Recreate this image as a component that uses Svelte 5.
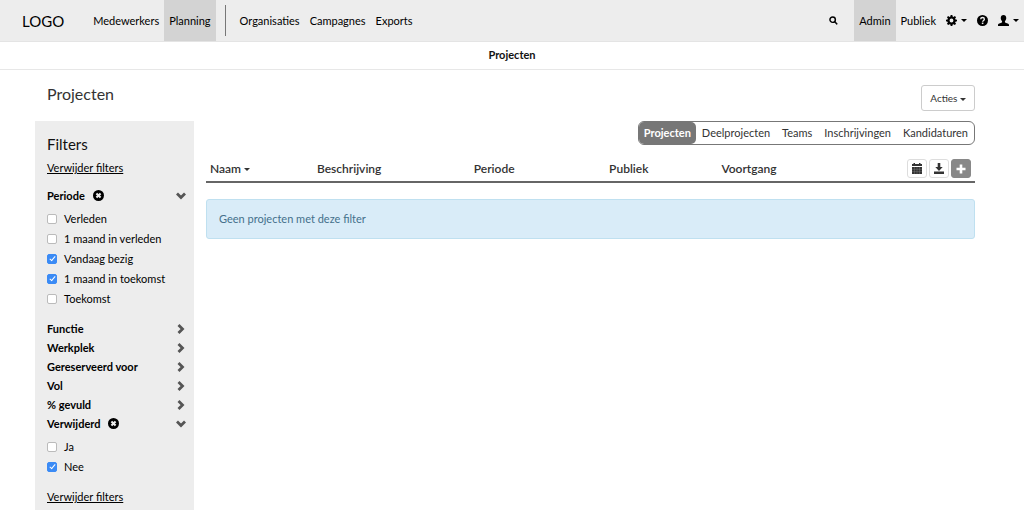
<script>
  const mainNav = [
    { label: "Medewerkers" },
    { label: "Planning", active: true },
  ];
  const extraNav = ["Organisaties", "Campagnes", "Exports"];
  const tabs = ["Projecten", "Deelprojecten", "Teams", "Inschrijvingen", "Kandidaturen"];

  let tab = $state("Projecten");

  let groups = $state([
    {
      name: "Periode", open: true,
      options: [
        { label: "Verleden", checked: false },
        { label: "1 maand in verleden", checked: false },
        { label: "Vandaag bezig", checked: true },
        { label: "1 maand in toekomst", checked: true },
        { label: "Toekomst", checked: false },
      ],
    },
    { name: "Functie", open: false, options: [] },
    { name: "Werkplek", open: false, options: [] },
    { name: "Gereserveerd voor", open: false, options: [] },
    { name: "Vol", open: false, options: [] },
    { name: "% gevuld", open: false, options: [] },
    {
      name: "Verwijderd", open: true,
      options: [
        { label: "Ja", checked: false },
        { label: "Nee", checked: true },
      ],
    },
  ]);

  function clearGroup(group) {
    for (const o of group.options) o.checked = false;
  }

  function clearAll(e) {
    e.preventDefault();
    groups.forEach(clearGroup);
  }
</script>

{#snippet caret()}
  <svg class="caret" viewBox="0 0 6 3" aria-hidden="true"><path d="M0 0h6L3 3z" /></svg>
{/snippet}

<header class="topbar">
  <a class="logo" href="#home">LOGO</a>
  <nav class="nav">
    {#each mainNav as item}
      <a href="#{item.label}" class:active={item.active}>{item.label}</a>
    {/each}
    <span class="divider"></span>
    {#each extraNav as label}
      <a href="#{label}">{label}</a>
    {/each}
  </nav>
  <nav class="nav right">
    <button class="search" aria-label="Zoeken">
      <svg viewBox="0 0 16 16"><circle cx="6.5" cy="6.5" r="4.8" fill="none" stroke="currentColor" stroke-width="2.6" /><path d="M9.500 10.500l1-1 4.500 4.300-1.400 1.400z" stroke="currentColor" /></svg>
    </button>
    <a href="#admin" class="active">Admin</a>
    <a href="#publiek">Publiek</a>
    <button class="settings" aria-label="Instellingen">
      <svg class="big" viewBox="0 0 16 16"><path fill-rule="evenodd" d="M6.8 0h2.4l.5 2.3 1.2.5 2-1.3 1.7 1.7-1.3 2 .5 1.2 2.2.4v2.4l-2.2.5-.5 1.2 1.3 2-1.7 1.7-2-1.3-1.2.5L9.2 16H6.8l-.5-2.2-1.2-.5-2 1.3-1.7-1.7 1.3-2-.5-1.2L0 9.200V6.800l2.200-.4.5-1.200-1.300-2 1.700-1.700 2 1.300 1.200-.5zM8 5.200a2.800 2.800 0 1 0 0 5.600 2.800 2.800 0 0 0 0-5.600z" /></svg>
      {@render caret()}
    </button>
    <button class="help" aria-label="Help">
      <svg class="big" viewBox="0 0 16 16"><circle cx="8" cy="8" r="8" /><path d="M5.400 6.200c0-3.400 5.300-3.400 5.300 0 0 1.700-2.500 1.800-2.500 3.600" fill="none" stroke="#eee" stroke-width="2" /><path d="M7 11h2.300v2.200H7z" fill="#eee" /></svg>
    </button>
    <button class="user" aria-label="Gebruiker">
      <svg class="big" viewBox="0 0 16 16"><path d="M8 0c2.500 0 4 1.700 4 4.300 0 1.900-.8 3.700-1.900 4.700v1.500c.4.900 5.500 1.700 5.900 3.600V16H0v-1.900c.4-1.900 5.500-2.700 5.900-3.600V9C4.800 8 4 6.200 4 4.300 4 1.700 5.500 0 8 0z" /></svg>
      {@render caret()}
    </button>
  </nav>
</header>

<div class="subbar">Projecten</div>

<div class="page">
  <div class="titlebar">
    <h1>Projecten</h1>
    <button class="actions">Acties {@render caret()}</button>
  </div>

  <div class="columns">
    <aside class="filters">
      <h2>Filters</h2>
      <a class="clear" href="#clear" onclick={clearAll}>Verwijder filters</a>
      <div class="groups">
        {#each groups as group}
          <section>
            <div class="group-head">
              <span>{group.name}</span>
              {#if group.options.some(o => o.checked)}
                <button class="reset" aria-label="Wis {group.name}" onclick={() => clearGroup(group)}>
                  <svg viewBox="0 0 16 16"><circle cx="8" cy="8" r="8" /><path d="M5 5l6 6M11 5l-6 6" stroke="#ededed" stroke-width="3" /></svg>
                </button>
              {/if}
              <button class="toggle" aria-label={group.name} aria-expanded={group.open} onclick={() => group.open = !group.open}>
                <svg class:open={group.open} viewBox="0 0 10 10"><path d="M2.500 1L6.500 5 2.500 9" fill="none" stroke="currentColor" stroke-width="2.800" /></svg>
              </button>
            </div>
            {#if group.open}
              <div class="options">
                {#each group.options as option}
                  <label><input type="checkbox" bind:checked={option.checked} />{option.label}</label>
                {/each}
              </div>
            {/if}
          </section>
        {/each}
      </div>
      <a class="clear" href="#clear" onclick={clearAll}>Verwijder filters</a>
    </aside>

    <main>
      <div class="tabs">
        {#each tabs as t}
          <button class:active={t === tab} onclick={() => tab = t}>{t}</button>
        {/each}
      </div>

      <table>
        <thead>
          <tr>
            <th class="naam">Naam {@render caret()}</th>
            <th class="beschrijving">Beschrijving</th>
            <th class="periode">Periode</th>
            <th class="publiek">Publiek</th>
            <th>Voortgang</th>
            <td>
              <div class="tools">
                <button aria-label="Kalender">
                  <svg viewBox="0 0 12 12"><path d="M1 1h1.500V0h1.500v1h4V0h1.500v1H11v2H1z" /><path d="M1 4h10v7H1z" /><path d="M1 6.300h10M1 8.600h10M3.500 4v7M6 4v7M8.500 4v7" stroke="#999" stroke-width=".3" /></svg>
                </button>
                <button aria-label="Downloaden">
                  <svg viewBox="0 0 12 12"><path d="M4.700 0h2.600v4h2.400L6 8 2.300 4h2.400zM1 8.500h10V11H1z" /></svg>
                </button>
                <button class="add" aria-label="Toevoegen">
                  <svg viewBox="0 0 12 12"><path d="M4.700 1.500h2.600v3.200h3.200v2.600H7.300v3.200H4.700V7.300H1.500V4.700h3.200z" /></svg>
                </button>
              </div>
            </td>
          </tr>
        </thead>
      </table>

      <div class="alert">Geen projecten met deze filter</div>
    </main>
  </div>
</div>

<style>
  :global(body) {
    background: #fff;
    color: #333;
    font-family: Lato, "Open Sans", sans-serif;
    font-size: 11px;
    line-height: 16px;
  }
  a { color: inherit; text-decoration: none; }
  button {
    border: 0;
    padding: 0;
    background: none;
    color: inherit;
    font: inherit;
    cursor: pointer;
  }
  svg { display: block; fill: currentColor; flex: none; }
  .caret { display: inline-block; width: 6px; height: 3px; vertical-align: middle; }

  .topbar {
    display: flex;
    align-items: center;
    height: 41px;
    background: #ededed;
    border-bottom: 1px solid #e4e4e4;
    color: #000;
  }
  .logo { padding: 0 24px 0 22px; font-size: 15px; }
  .nav { display: flex; align-items: center; height: 100%; }
  .nav a {
    display: flex;
    align-items: center;
    height: 100%;
    padding: 0 5px;
  }
  .nav a.active { background: #d3d3d3; }
  .divider { width: 1px; height: 31px; margin: 0 9px; background: #777; }
  .right { margin-left: auto; }
  .right button { display: flex; align-items: center; gap: 4px; padding: 0 5px; }
  .right svg:not(.caret) { width: 9px; height: 9px; }
  .right svg.big { width: 11px; height: 11px; }
  .right .search { padding: 0 16px; }

  .subbar {
    padding: 5px 0 6px;
    border-bottom: 1px solid #e7e7e7;
    color: #111;
    font-weight: bold;
    text-align: center;
  }

  .page { padding: 15px 49px 0 35px; }
  .titlebar { display: flex; justify-content: space-between; align-items: flex-start; padding-bottom: 10px; }
  h1, h2 { margin: 0; font-weight: normal; line-height: 18px; }
  h1 { padding-left: 12px; font-size: 16px; }
  h2 { font-size: 15px; color: #111; }
  .actions {
    padding: 3px 8px;
    border: 1px solid #ccc;
    border-radius: 3px;
    font-size: 10px;
    line-height: 18px;
  }

  .columns { display: flex; align-items: flex-start; gap: 12px; }
  .filters {
    flex: none;
    box-sizing: border-box;
    width: 159px;
    padding: 14px 8px 12px 12px;
    background: #ededed;
    color: #000;
  }
  .clear { display: block; text-decoration: underline; }
  h2 + .clear { margin-top: 7px; }
  .groups { padding: 10px 0 2px; }
  .group-head {
    display: flex;
    align-items: center;
    height: 19px;
    font-weight: bold;
  }
  .reset { margin-left: 8px; }
  .reset svg { width: 11px; height: 11px; }
  .toggle { margin-left: auto; color: #555; }
  .toggle svg { width: 10px; height: 10px; }
  .toggle svg.open { transform: rotate(90deg); }
  .options { padding: 4px 0 10px; }
  .options label { display: flex; align-items: center; gap: 7px; height: 20px; }
  .options input {
    appearance: none;
    display: flex;
    justify-content: center;
    box-sizing: border-box;
    width: 10px;
    height: 10px;
    margin: 0;
    border: 1px solid #bbb;
    border-radius: 2px;
    background: #fff;
  }
  .options input:checked { border-color: #3b8bf5; background: #3b8bf5; }
  .options input:checked::after {
    content: "";
    width: 2px;
    height: 5px;
    border: solid #fff;
    border-width: 0 1px 1px 0;
    transform: rotate(40deg);
  }

  main { flex: 1; min-width: 0; }
  .tabs {
    display: flex;
    width: fit-content;
    margin-left: auto;
    border: 1px solid #777;
    border-radius: 6px;
  }
  .tabs button { padding: 0 6px; border-radius: 5px; line-height: 22px; }
  .tabs .active { padding: 0 5px; background: #777; color: #fff; font-weight: bold; }

  table {
    width: 100%;
    margin-top: 10px;
    border-collapse: collapse;
    table-layout: fixed;
    border-bottom: 2px solid #666;
  }
  th, td { box-sizing: border-box; padding: 4px 4px 3px; text-align: left; }
  th { font-size: 12px; font-weight: 600; line-height: 19px; }
  .naam { width: 13.9%; }
  .beschrijving { width: 20.4%; }
  .periode { width: 17.6%; }
  .publiek { width: 14.6%; }
  .tools { display: flex; justify-content: flex-end; gap: 2px; }
  .tools button {
    display: grid;
    place-items: center;
    width: 20px;
    height: 19px;
    border: 1px solid #ddd;
    border-radius: 3px;
  }
  .tools svg { width: 12px; height: 12px; }
  .tools .add { border-color: #888; background: #888; color: #fff; }

  .alert {
    margin-top: 16px;
    padding: 11px 12px;
    border: 1px solid #bfe0f0;
    border-radius: 3px;
    background: #d9ecf8;
    color: #44708b;
  }
</style>
